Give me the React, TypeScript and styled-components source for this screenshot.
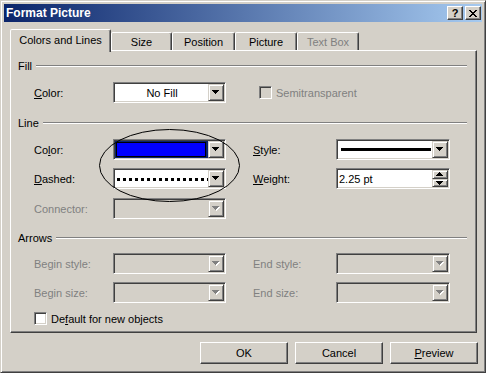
import styled, { createGlobalStyle } from 'styled-components';

const face = '#d4d0c8';
const shadow = '#808080';
const dark = '#404040';

const GlobalStyle = createGlobalStyle`
  html, body {
    margin: 0;
    padding: 0;
    background: ${face};
  }
  body {
    font-family: "Liberation Sans", Arial, sans-serif;
    font-size: 11px;
    color: #000;
  }
`;

const Window = styled.div`
  position: relative;
  width: 486px;
  height: 373px;
  box-sizing: border-box;
  background: ${face};
  border: 1px solid;
  border-color: ${face} ${dark} ${dark} ${face};
  box-shadow: inset 1px 1px #fff, inset -1px -1px ${shadow};
  padding: 3px;
  display: flex;
  flex-direction: column;
`;

const TitleBar = styled.div`
  height: 18px;
  display: flex;
  align-items: center;
  padding: 0 1px 0 2px;
  background: linear-gradient(to right, #0a246a, #a6caf0);
`;

const TitleText = styled.div`
  flex: 1;
  color: #fff;
  font-weight: bold;
  font-size: 12px;
`;

const CaptionButton = styled.div<{ $gap?: number }>`
  width: 16px;
  height: 14px;
  box-sizing: border-box;
  margin-left: ${(p) => p.$gap ?? 0}px;
  background: ${face};
  border: 1px solid;
  border-color: #fff ${dark} ${dark} #fff;
  box-shadow: inset -1px -1px ${shadow};
  display: flex;
  align-items: center;
  justify-content: center;
  font-weight: bold;
  font-size: 11px;
  line-height: 1;
`;

const TabStrip = styled.div`
  display: flex;
  align-items: flex-end;
  height: 21px;
  margin: 7px 0 0 6px;
  position: relative;
  z-index: 1;
`;

const Tab = styled.div<{ $w: number; $active?: boolean; $disabled?: boolean }>`
  width: ${(p) => p.$w}px;
  height: ${(p) => (p.$active ? 23 : 18)}px;
  margin-bottom: ${(p) => (p.$active ? -2 : 0)}px;
  box-sizing: border-box;
  background: ${face};
  border: 1px solid;
  border-bottom: none;
  border-color: #fff ${dark} transparent #fff;
  border-radius: 2px 2px 0 0;
  box-shadow: inset -1px 0 ${shadow};
  display: flex;
  align-items: ${(p) => (p.$active ? 'flex-start' : 'center')};
  padding-top: ${(p) => (p.$active ? 4 : 1)}px;
  justify-content: center;
  color: ${(p) => (p.$disabled ? shadow : '#000')};
`;

const Panel = styled.div`
  width: 467px;
  height: 283px;
  box-sizing: border-box;
  margin-left: 6px;
  border: 1px solid;
  border-color: #fff ${dark} ${dark} #fff;
  box-shadow: inset -1px -1px ${shadow};
  padding: 8px 9px 0 7px;
`;

const GroupHeader = styled.div<{ $mt?: number }>`
  display: flex;
  align-items: center;
  gap: 4px;
  height: 13px;
  margin-top: ${(p) => p.$mt ?? 0}px;
`;

const GroupRule = styled.div`
  flex: 1;
  height: 0;
  margin-top: 1px;
  border-top: 1px solid ${shadow};
  border-bottom: 1px solid #fff;
`;

const Row = styled.div<{ $mt: number }>`
  display: flex;
  align-items: center;
  gap: 27px;
  margin-top: ${(p) => p.$mt}px;
  padding-left: 16px;
  height: 21px;
`;

const Field = styled.div<{ $ml?: number }>`
  display: flex;
  align-items: center;
  margin-left: ${(p) => p.$ml ?? 0}px;
`;

const Label = styled.div<{ $w: number; $disabled?: boolean }>`
  width: ${(p) => p.$w}px;
  color: ${(p) => (p.$disabled ? shadow : '#000')};
`;

const Sunken = styled.div<{ $w: number; $disabled?: boolean }>`
  width: ${(p) => p.$w}px;
  height: 21px;
  box-sizing: border-box;
  border: 1px solid;
  border-color: ${shadow} #fff #fff ${shadow};
  box-shadow: inset 1px 1px ${dark}, inset -1px -1px ${face};
  padding: 1px;
  display: flex;
  background: ${(p) => (p.$disabled ? face : '#fff')};
`;

const Value = styled.div<{ $align?: string }>`
  flex: 1;
  display: flex;
  align-items: center;
  justify-content: ${(p) => p.$align ?? 'center'};
  padding-left: 1px;
`;

const Highlight = styled.div`
  flex: 1;
  background: #0a246a;
  padding: 1px 2px 1px 1px;
  display: flex;
`;

const Swatch = styled.div`
  flex: 1;
  border: 1px solid #000;
  background: #0000ff;
`;

const Dots = styled.div`
  flex: 1;
  height: 3px;
  margin: 1px 0 0 1px;
  background: repeating-linear-gradient(to right, #000 0 3px, transparent 3px 6px);
`;

const SolidLine = styled.div`
  flex: 1;
  height: 3px;
  margin: 0 1px 0 2px;
  background: #000;
`;

const DropButton = styled.div`
  width: 16px;
  box-sizing: border-box;
  background: ${face};
  border: 1px solid;
  border-color: ${face} ${dark} ${dark} ${face};
  box-shadow: inset 1px 1px #fff, inset -1px -1px ${shadow};
  display: flex;
  align-items: center;
  justify-content: center;
`;

const SpinColumn = styled.div`
  width: 16px;
  display: flex;
  flex-direction: column;
`;

const SpinButton = styled(DropButton)<{ $h: number }>`
  width: 16px;
  height: ${(p) => p.$h}px;
`;

const ArrowSvg = styled.svg`
  display: block;
`;

const CheckRow = styled.div<{ $mt?: number }>`
  display: flex;
  align-items: center;
  gap: 4px;
  margin-top: ${(p) => p.$mt ?? 0}px;
  padding-left: 16px;
`;

const CheckLabel = styled.div<{ $disabled?: boolean }>`
  color: ${(p) => (p.$disabled ? shadow : '#000')};
`;

const CheckBox = styled.div<{ $disabled?: boolean }>`
  width: 13px;
  height: 13px;
  box-sizing: border-box;
  border: 1px solid;
  border-color: ${shadow} #fff #fff ${shadow};
  box-shadow: inset 1px 1px ${dark}, inset -1px -1px ${face};
  background: ${(p) => (p.$disabled ? face : '#fff')};
`;

const Footer = styled.div`
  display: flex;
  justify-content: flex-end;
  gap: 7px;
  margin-top: 9px;
  padding-right: 4px;
`;

const Button = styled.div`
  width: 88px;
  height: 22px;
  box-sizing: border-box;
  border: 1px solid;
  border-color: #fff ${dark} ${dark} #fff;
  box-shadow: inset -1px -1px ${shadow};
  display: flex;
  align-items: center;
  justify-content: center;
`;

const Callout = styled.svg`
  position: absolute;
  left: 98px;
  top: 128px;
  pointer-events: none;
`;

const downPath = 'M0 0h7v1h-1v1h-1v1h-1v1h-1v-1h-1v-1h-1v-1h-1z';
const upPath = 'M3 0h1v1h1v1h1v1h1v1h-7v-1h1v-1h1v-1h1z';

const Arrow = ({ up, disabled }: { up?: boolean; disabled?: boolean }) => (
  <ArrowSvg width="8" height="5" viewBox="0 0 8 5">
    {disabled && <path d={up ? upPath : downPath} fill="#fff" transform="translate(1 1)" />}
    <path d={up ? upPath : downPath} fill={disabled ? shadow : '#000'} />
  </ArrowSvg>
);

const closePixels = [
  [0, 1, 6, 7],
  [1, 2, 5, 6],
  [2, 3, 4, 5],
  [3, 4],
  [2, 3, 4, 5],
  [1, 2, 5, 6],
  [0, 1, 6, 7],
];

const CloseGlyph = () => (
  <ArrowSvg width="8" height="7" viewBox="0 0 8 7">
    {closePixels.map((xs, y) =>
      xs.map((x) => <rect key={`${x}-${y}`} x={x} y={y} width="1" height="1" fill="#000" />)
    )}
  </ArrowSvg>
);

type ComboProps = {
  w: number;
  disabled?: boolean;
  children?: React.ReactNode;
};

const Combo = ({ w, disabled, children }: ComboProps) => (
  <Sunken $w={w} $disabled={disabled}>
    {children ?? <Value />}
    <DropButton>
      <Arrow disabled={disabled} />
    </DropButton>
  </Sunken>
);

export default function App() {
  return (
    <>
      <GlobalStyle />
      <Window>
        <TitleBar>
          <TitleText>Format Picture</TitleText>
          <CaptionButton>?</CaptionButton>
          <CaptionButton $gap={2}>
            <CloseGlyph />
          </CaptionButton>
        </TitleBar>

        <TabStrip>
          <Tab $w={101} $active>
            Colors and Lines
          </Tab>
          <Tab $w={61}>Size</Tab>
          <Tab $w={63}>Position</Tab>
          <Tab $w={62}>Picture</Tab>
          <Tab $w={62} $disabled>
            Text Box
          </Tab>
        </TabStrip>

        <Panel>
          <GroupHeader>
            Fill
            <GroupRule />
          </GroupHeader>
          <Row $mt={10}>
            <Field>
              <Label $w={79}>
                <u>C</u>olor:
              </Label>
              <Combo w={113}>
                <Value>No Fill</Value>
              </Combo>
            </Field>
            <Field $ml={6}>
              <CheckRow style={{ paddingLeft: 0 }}>
                <CheckBox $disabled />
                <CheckLabel $disabled>Semitransparent</CheckLabel>
              </CheckRow>
            </Field>
          </Row>

          <GroupHeader $mt={13}>
            Line
            <GroupRule />
          </GroupHeader>
          <Row $mt={10}>
            <Field>
              <Label $w={79}>
                Co<u>l</u>or:
              </Label>
              <Combo w={113}>
                <Highlight>
                  <Swatch />
                </Highlight>
              </Combo>
            </Field>
            <Field>
              <Label $w={83}>
                <u>S</u>tyle:
              </Label>
              <Combo w={114}>
                <Value>
                  <SolidLine />
                </Value>
              </Combo>
            </Field>
          </Row>
          <Row $mt={8}>
            <Field>
              <Label $w={79}>
                <u>D</u>ashed:
              </Label>
              <Combo w={113}>
                <Value>
                  <Dots />
                </Value>
              </Combo>
            </Field>
            <Field>
              <Label $w={83}>
                <u>W</u>eight:
              </Label>
              <Sunken $w={114}>
                <Value $align="flex-start">2.25 pt</Value>
                <SpinColumn>
                  <SpinButton $h={9}>
                    <Arrow up />
                  </SpinButton>
                  <SpinButton $h={8}>
                    <Arrow />
                  </SpinButton>
                </SpinColumn>
              </Sunken>
            </Field>
          </Row>
          <Row $mt={9}>
            <Field>
              <Label $w={79} $disabled>
                Connector:
              </Label>
              <Combo w={113} disabled />
            </Field>
          </Row>

          <GroupHeader $mt={12}>
            Arrows
            <GroupRule />
          </GroupHeader>
          <Row $mt={9}>
            <Field>
              <Label $w={79} $disabled>
                Begin style:
              </Label>
              <Combo w={113} disabled />
            </Field>
            <Field>
              <Label $w={83} $disabled>
                End style:
              </Label>
              <Combo w={114} disabled />
            </Field>
          </Row>
          <Row $mt={8}>
            <Field>
              <Label $w={79} $disabled>
                Begin size:
              </Label>
              <Combo w={113} disabled />
            </Field>
            <Field>
              <Label $w={83} $disabled>
                End size:
              </Label>
              <Combo w={114} disabled />
            </Field>
          </Row>
          <CheckRow $mt={9}>
            <CheckBox />
            <CheckLabel>
              De<u>f</u>ault for new objects
            </CheckLabel>
          </CheckRow>
        </Panel>

        <Footer>
          <Button>OK</Button>
          <Button>Cancel</Button>
          <Button>
            <span>
              <u>P</u>review
            </span>
          </Button>
        </Footer>

        <Callout width="142" height="74" viewBox="0 0 142 74">
          <ellipse cx="70.5" cy="36.5" rx="70" ry="36" fill="none" stroke="#000" strokeWidth="1" />
        </Callout>
      </Window>
    </>
  );
}
